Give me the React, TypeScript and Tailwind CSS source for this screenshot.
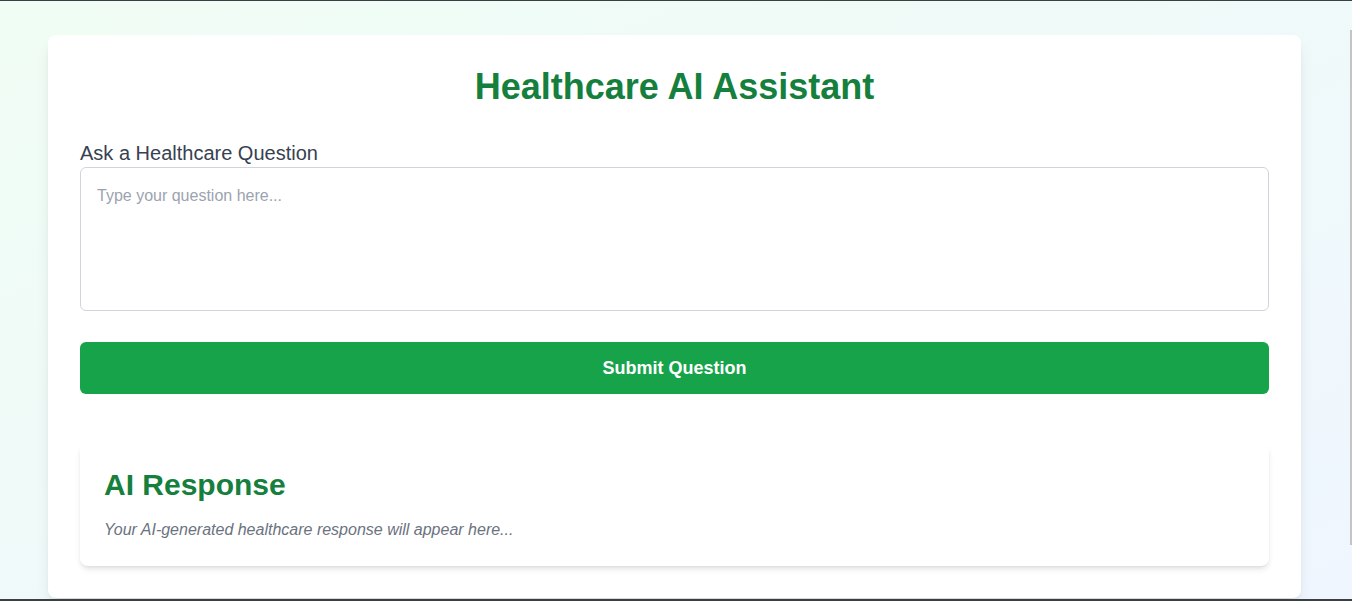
import { useState } from "react";

export default function App() {
  const [question, setQuestion] = useState("");

  return (
    <div className="flex h-[601px] overflow-hidden border-t border-b-2 border-[#3a3f44] bg-gradient-to-br from-[#f0fdf4] to-[#eff6ff] font-['Liberation_Sans',Arial,sans-serif]">
      <main className="flex-1 pl-12 pr-[49px] pt-[34px]">
        <div className="rounded-lg bg-white p-8 shadow-lg">
          <h1 className="mb-8 text-center text-4xl font-bold text-[#15803d]">Healthcare AI Assistant</h1>

          <label htmlFor="question" className="block text-xl text-[#374151]">
            Ask a Healthcare Question
          </label>
          <textarea
            id="question"
            value={question}
            onChange={(e) => setQuestion(e.target.value)}
            placeholder="Type your question here..."
            className="block h-36 w-full resize-none rounded-md border border-[#d1d5db] p-4 text-base text-[#1f2937] placeholder:text-[#9ca3af] focus:outline-none"
          />

          <button className="mt-[31px] w-full rounded-md bg-[#16a34a] py-3 text-lg font-bold text-white">
            Submit Question
          </button>

          <div className="mt-[49px] rounded-lg bg-white p-6 shadow-md">
            <h2 className="mb-[15px] text-3xl font-bold text-[#15803d]">AI Response</h2>
            <p className="text-base italic text-[#6b7280]">Your AI-generated healthcare response will appear here...</p>
          </div>
        </div>
      </main>
      <div className="w-[2px] pt-[29px]">
        <div className="h-[515px] bg-[#c4c4c4]" />
      </div>
    </div>
  );
}
